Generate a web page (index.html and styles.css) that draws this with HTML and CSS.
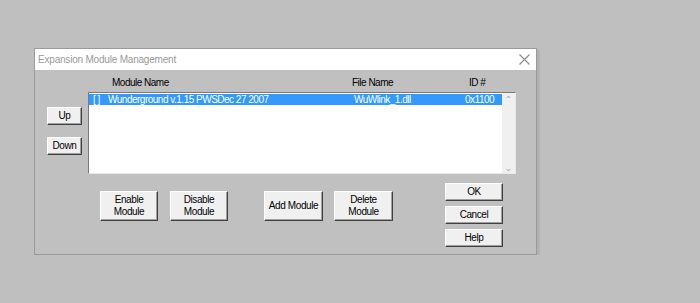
FILE: index.html
```html
<!DOCTYPE html>
<html lang="en">
<head>
    <meta charset="UTF-8">
    <title>Expansion Module Management</title>
    <link rel="stylesheet" href="styles.css">
</head>
<body>
    <div class="dialog">
        <div class="titlebar">
            <span class="title">Expansion Module Management</span>
            <svg class="close" width="11" height="11" viewBox="0 0 11 11">
                <path d="M0.5 0.5 L10.5 10.5 M10.5 0.5 L0.5 10.5" stroke="#8a8a8a" stroke-width="1.1" fill="none"/>
            </svg>
        </div>
        <div class="body">
            <div class="top-row">
                <div class="side">
                    <button class="btn small up">Up</button>
                    <button class="btn small">Down</button>
                </div>
                <div class="main">
                    <div class="headers">
                        <span class="h-name">Module Name</span>
                        <span class="h-file">File Name</span>
                        <span class="h-id">ID #</span>
                    </div>
                    <div class="listbox">
                        <div class="rows">
                            <div class="row selected">
                                <span class="c-check">[ ]</span>
                                <span class="c-name">Wunderground v.1.15 PWSDec 27 2007</span>
                                <span class="c-file">WuWlink_1.dll</span>
                                <span class="c-id">0x1100</span>
                            </div>
                        </div>
                        <div class="scrollbar">
                            <span class="arrow">&#x2303;</span>
                            <span class="arrow down">&#x2303;</span>
                        </div>
                    </div>
                </div>
            </div>
            <div class="bottom-row">
                <button class="btn big enable">Enable<br>Module</button>
                <button class="btn big disable">Disable<br>Module</button>
                <button class="btn big add">Add Module</button>
                <button class="btn big delete">Delete<br>Module</button>
                <div class="actions">
                    <button class="btn action">OK</button>
                    <button class="btn action">Cancel</button>
                    <button class="btn action">Help</button>
                </div>
            </div>
        </div>
    </div>
</body>
</html>
```

FILE: styles.css
```css
body {
    margin: 0;
    background-color: #bfbfbf;
    font-family: "Liberation Sans", Arial, sans-serif;
    font-size: 10px;
    letter-spacing: -0.5px;
}

.dialog {
    margin: 48px 0 0 34px;
    width: 501px;
    height: 205px;
    border: 1px solid #9a9a9a;
    background-color: #c0c0c0;
    box-shadow: 1px 1px 0 #b0b0b0, 2px 2px 2px #a8a8a8;
}

.titlebar {
    height: 21px;
    background-color: #ffffff;
    display: flex;
    align-items: center;
    justify-content: space-between;
    padding: 0 6px 0 3px;
}

.title {
    font-size: 10px;
    letter-spacing: -0.2px;
    color: #9a9a9a;
}

.body {
    padding-left: 12px;
}

.top-row {
    display: flex;
}

.side {
    width: 35px;
    margin-right: 6px;
    padding-top: 37px;
    display: flex;
    flex-direction: column;
    gap: 12px;
}

.btn {
    font-family: "Liberation Sans", Arial, sans-serif;
    font-size: 10px;
    letter-spacing: -0.4px;
    color: #000;
    background-color: #f0f0f0;
    border: 1px solid;
    border-color: #ffffff #404040 #404040 #ffffff;
    box-shadow: inset -1px -1px 0 #a0a0a0;
    padding: 0;
    line-height: 12px;
    white-space: nowrap;
}

.btn.small {
    width: 35px;
    height: 18px;
}

.main {
    width: 428px;
}

.headers {
    height: 22px;
    position: relative;
}

.headers span {
    position: absolute;
    top: 7px;
}

.h-name { left: 24px; }
.h-file { left: 264px; }
.h-id { left: 381px; }

.listbox {
    height: 82px;
    box-sizing: border-box;
    border: 1px solid;
    border-color: #7a7a7a #e8e8e8 #e8e8e8 #7a7a7a;
    background-color: #ffffff;
    display: flex;
}

.rows {
    flex: 1;
    padding-top: 1px;
}

.row {
    height: 11px;
    line-height: 12px;
    position: relative;
    color: #ffffff;
}

.row.selected {
    background-color: #3399ff;
}

.row span {
    position: absolute;
    top: 0;
}

.c-check { left: 4px; }
.c-name { left: 19px; }
.c-file { left: 265px; }
.c-id { left: 376px; }

.scrollbar {
    width: 13px;
    background-color: #f0f0f0;
    display: flex;
    flex-direction: column;
    justify-content: space-between;
    align-items: center;
    padding: 2px 0 1px;
}

.arrow {
    color: #b0b0b0;
    font-family: "DejaVu Sans", sans-serif;
    font-size: 10px;
    line-height: 10px;
    letter-spacing: 0;
}

.arrow.down {
    transform: rotate(180deg);
}

.bottom-row {
    display: flex;
    align-items: flex-start;
}

.btn.big {
    height: 30px;
    margin-top: 17px;
}

.enable { margin-left: 53px; width: 58px; }
.disable { margin-left: 12px; width: 58px; }
.add { margin-left: 36px; width: 59px; }
.delete { margin-left: 11px; width: 59px; }

.actions {
    margin-left: 52px;
    margin-top: 9px;
    display: flex;
    flex-direction: column;
    gap: 5px;
}

.btn.action {
    width: 58px;
    height: 18px;
}
```
